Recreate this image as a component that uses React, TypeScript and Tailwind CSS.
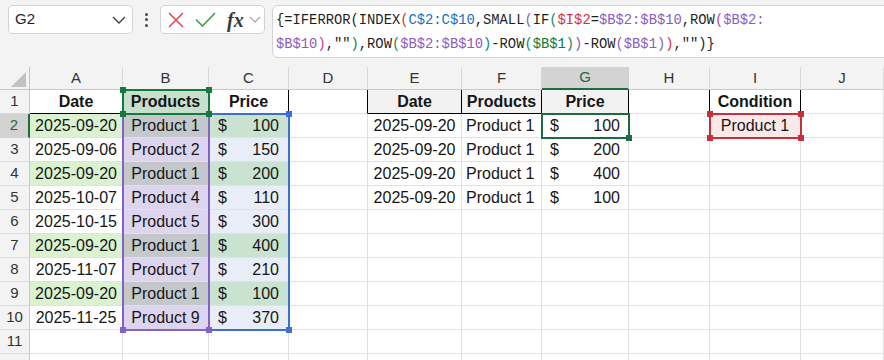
import React from 'react';

type Row = [string, string, number];

const source: Row[] = [
  ['2025-09-20', 'Product 1', 100],
  ['2025-09-06', 'Product 2', 150],
  ['2025-09-20', 'Product 1', 200],
  ['2025-10-07', 'Product 4', 110],
  ['2025-10-15', 'Product 5', 300],
  ['2025-09-20', 'Product 1', 400],
  ['2025-11-07', 'Product 7', 210],
  ['2025-09-20', 'Product 1', 100],
  ['2025-11-25', 'Product 9', 370],
];

const results = source.filter((r) => r[1] === 'Product 1');

const letters = ['A', 'B', 'C', 'D', 'E', 'F', 'G', 'H', 'I', 'J'];

// formula text, split in the two lines the bar wraps it into
const K = 'text-[#1f1f1f]';
const R = 'text-[#d0343c]';
const B = 'text-[#1370c4]';
const P = 'text-[#8a5cc0]';
const G = 'text-[#17875a]';
const DG = 'text-[#117a2e]';
const M = 'text-[#c43aa8]';

const line1: [string, string][] = [
  ['{=IFERROR(INDEX', K], ['(', R], ['C$2:C$10', B], [',SMALL', K], ['(', P], ['IF', K], ['(', G],
  ['$I$2', R], ['=', K], ['$B$2:$B$10', P], [',ROW', K], ['(', M], ['$B$2:', P],
];
const line2: [string, string][] = [
  ['$B$10', P], [')', M], [',""', K], [')', G], [',ROW', K], ['(', G], ['$B$2:$B$10', P], [')', G],
  ['-ROW', K], ['(', G], ['$B$1', DG], [')', G], [')', P], ['-ROW', K], ['(', P], ['$B$1', P],
  [')', P], [')', R], [',""', K], [')}', K],
];

const cell = 'h-[24px] border-r border-b flex items-center whitespace-nowrap overflow-hidden text-[16px] text-[#161616]';
const gridLine = 'border-r-[#e1e1e1] border-b-[#e1e1e1]';

const Money: React.FC<{ v: number }> = ({ v }) => (
  <>
    <span>$</span>
    <span>{v}</span>
  </>
);

const Handle: React.FC<{ pos: string; color: string }> = ({ pos, color }) => (
  <span className={`absolute w-[6px] h-[6px] ${pos} ${color}`} />
);

const TL = '-left-[4px] -top-[4px]';
const TR = '-right-[4px] -top-[4px]';
const BL = '-left-[4px] -bottom-[4px]';
const BR = '-right-[4px] -bottom-[4px]';

function rowCells(row: number): React.ReactNode[] {
  if (row === 1) {
    return [
      <div key="A" className={`${cell} border-r-[#e1e1e1] border-b-black justify-center font-bold`}>Date</div>,
      <div key="B" className={`${cell} border-r-black border-b-black justify-center font-bold bg-[#c6e0cb]`}>Products</div>,
      <div key="C" className={`${cell} border-r-black border-b-black justify-center font-bold`}>Price</div>,
      <div key="D" className={`${cell} border-r-black border-b-[#e1e1e1]`} />,
      <div key="E" className={`${cell} border-r-black border-b-black justify-center font-bold bg-[#f2f2f2]`}>Date</div>,
      <div key="F" className={`${cell} border-r-black border-b-black justify-center font-bold bg-[#f2f2f2]`}>Products</div>,
      <div key="G" className={`${cell} border-r-black border-b-black justify-center font-bold bg-[#f2f2f2]`}>Price</div>,
      <div key="H" className={`${cell} border-r-black border-b-[#e1e1e1]`} />,
      <div key="I" className={`${cell} border-r-black border-b-black justify-center font-bold`}>Condition</div>,
      <div key="J" className={`${cell} ${gridLine}`} />,
    ];
  }

  const src = source[row - 2];
  const res = results[row - 2];
  if (!src) {
    return letters.map((l) => <div key={l} className={`${cell} ${gridLine}`} />);
  }
  const hit = src[1] === 'Product 1';

  return [
    <div key="A" className={`${cell} ${gridLine} justify-center ${hit ? 'bg-[#daf2d0]' : 'bg-white'}`}>{src[0]}</div>,
    <div key="B" className={`${cell} ${gridLine} justify-center ${hit ? 'bg-[#c4c8ca]' : 'bg-[#ddd4ee]'}`}>{src[1]}</div>,
    <div key="C" className={`${cell} ${gridLine} justify-between px-[9px] ${hit ? 'bg-[#c9e3d0]' : 'bg-[#e8edf8]'}`}>
      <Money v={src[2]} />
    </div>,
    <div key="D" className={`${cell} ${gridLine}`} />,
    <div key="E" className={`${cell} ${gridLine} justify-center`}>{res ? res[0] : ''}</div>,
    <div key="F" className={`${cell} ${gridLine} pl-[4px]`}>{res ? res[1] : ''}</div>,
    <div key="G" className={`${cell} ${gridLine} justify-between px-[8px]`}>{res ? <Money v={res[2]} /> : null}</div>,
    <div key="H" className={`${cell} ${gridLine}`} />,
    row === 2 ? (
      <div key="I" className={`${cell} ${gridLine} justify-center bg-[#fbe8e9]`}>Product 1</div>
    ) : (
      <div key="I" className={`${cell} ${gridLine}`} />
    ),
    <div key="J" className={`${cell} ${gridLine}`} />,
  ];
}

const FormulaBar: React.FC = () => (
  <div className="h-[67px] bg-[#f3f3f3] flex items-start pt-[5px]">
    {/* Name box */}
    <div className="ml-[8px] w-[125px] h-[29px] bg-white border border-[#d3d3d3] rounded-[5px] flex items-center justify-between pl-[6px] pr-[6px]">
      <span className="text-[15px] text-[#1f1f1f]">G2</span>
      <svg width="14" height="8" viewBox="0 0 14 8" fill="none" aria-hidden="true">
        <path d="M1 1l6 6 6-6" stroke="#404040" strokeWidth="1.4" />
      </svg>
    </div>

    {/* Vertical dots */}
    <div className="w-[27px] h-[29px] flex flex-col items-center justify-center gap-[2.5px]">
      <span className="w-[3px] h-[3px] rounded-full bg-[#4a4a4a]" />
      <span className="w-[3px] h-[3px] rounded-full bg-[#4a4a4a]" />
      <span className="w-[3px] h-[3px] rounded-full bg-[#4a4a4a]" />
    </div>

    {/* Cancel / enter / insert function */}
    <div className="w-[105px] h-[29px] bg-white border border-[#d3d3d3] rounded-[5px] flex items-center pl-[7px]">
      <svg width="16" height="16" viewBox="0 0 16 16" fill="none" aria-hidden="true">
        <path d="M1 1l14 14M15 1L1 15" stroke="#e0474d" strokeWidth="1.5" />
      </svg>
      <svg className="ml-[11px]" width="21" height="15" viewBox="0 0 21 15" fill="none" aria-hidden="true">
        <path d="M1 7.5l6.5 6.5L20 1" stroke="#3aa04a" strokeWidth="1.6" />
      </svg>
      <span className="ml-[11px] font-['Liberation_Serif'] italic font-bold text-[20px] leading-none text-[#3a3a3a]">fx</span>
      <svg className="ml-[5px]" width="12" height="7" viewBox="0 0 12 7" fill="none" aria-hidden="true">
        <path d="M1 1l5 5 5-5" stroke="#a6a6a6" strokeWidth="1.2" />
      </svg>
    </div>

    {/* Formula */}
    <div className="ml-[7px] flex-1 -mr-[4px] h-[53px] bg-white border border-[#d3d3d3] rounded-l-[6px] pl-[3px] pt-[3px] font-['Liberation_Mono'] text-[13.8px] leading-[24px] whitespace-nowrap">
      <div>
        {line1.map(([t, c], i) => (
          <span key={i} className={c}>{t}</span>
        ))}
      </div>
      <div>
        {line2.map(([t, c], i) => (
          <span key={i} className={c}>{t}</span>
        ))}
      </div>
    </div>
  </div>
);

const App: React.FC = () => {
  const rows = Array.from({ length: 12 }, (_, i) => i + 1);

  return (
    <div className="w-[884px] h-[360px] overflow-hidden bg-white font-['Liberation_Sans',Arial,sans-serif]">
      <FormulaBar />

      <div className="relative">
        <div className="grid grid-cols-[30px_93px_86px_80px_79px_94px_80px_87px_81px_91px_83px]">
          {/* Column headers */}
          <div className="h-[23px] relative bg-[#f3f3f3] border-r border-b border-r-[#c8c8c8] border-b-[#c8c8c8]">
            <svg className="absolute right-[3px] bottom-[2px]" width="15" height="15" viewBox="0 0 15 15" aria-hidden="true">
              <path d="M15 0V15H0z" fill="#c2c2c2" />
            </svg>
          </div>
          {letters.map((l) =>
            l === 'G' ? (
              <div
                key={l}
                className="h-[23px] bg-[#d3d3d3] border-r border-b-2 border-r-[#d0d0d0] border-b-[#1e6b41] flex items-center justify-center text-[15px] text-[#1e6b41]"
              >
                {l}
              </div>
            ) : (
              <div
                key={l}
                className="h-[23px] bg-[#f3f3f3] border-r border-b border-r-[#d9d9d9] border-b-[#c8c8c8] flex items-center justify-center text-[15px] text-[#333333]"
              >
                {l}
              </div>
            )
          )}

          {rows.map((r) => (
            <React.Fragment key={r}>
              {r === 2 ? (
                <div className="h-[24px] bg-[#d2d2d2] border-r-2 border-b border-r-[#1e6b41] border-b-[#d6d6d6] flex items-center justify-center text-[15px] text-[#1e6b41]">
                  {r}
                </div>
              ) : (
                <div className="h-[24px] bg-[#f3f3f3] border-r border-b border-r-[#c8c8c8] border-b-[#dcdcdc] flex items-center justify-center text-[15px] text-[#333333]">
                  {r < 12 ? r : ''}
                </div>
              )}
              {rowCells(r)}
            </React.Fragment>
          ))}
        </div>

        {/* Range reference highlights */}
        <div className="absolute left-[208px] top-[46px] w-[82px] h-[218px] border-2 border-[#3c6fd0] pointer-events-none">
          <Handle pos={TR} color="bg-[#3c6fd0]" />
          <Handle pos={BR} color="bg-[#3c6fd0]" />
        </div>
        <div className="absolute left-[122px] top-[46px] w-[88px] h-[218px] border-2 border-[#8661c5] pointer-events-none">
          <Handle pos={BL} color="bg-[#8661c5]" />
          <Handle pos={BR} color="bg-[#8661c5]" />
        </div>
        <div className="absolute left-[122px] top-[22px] w-[88px] h-[26px] border-2 border-[#137a3c] pointer-events-none">
          <Handle pos={TL} color="bg-[#137a3c]" />
          <Handle pos={TR} color="bg-[#137a3c]" />
          <Handle pos={BL} color="bg-[#137a3c]" />
          <Handle pos={BR} color="bg-[#137a3c]" />
        </div>
        <div className="absolute left-[709px] top-[46px] w-[93px] h-[26px] border-2 border-[#c3313d] pointer-events-none">
          <Handle pos={TL} color="bg-[#c3313d]" />
          <Handle pos={TR} color="bg-[#c3313d]" />
          <Handle pos={BL} color="bg-[#c3313d]" />
          <Handle pos={BR} color="bg-[#c3313d]" />
        </div>

        {/* Active cell G2 */}
        <div className="absolute left-[541px] top-[46px] w-[89px] h-[26px] border-2 border-[#1e6b41] pointer-events-none">
          <Handle pos={BR} color="bg-[#1e6b41]" />
        </div>
      </div>
    </div>
  );
};

export default App;
